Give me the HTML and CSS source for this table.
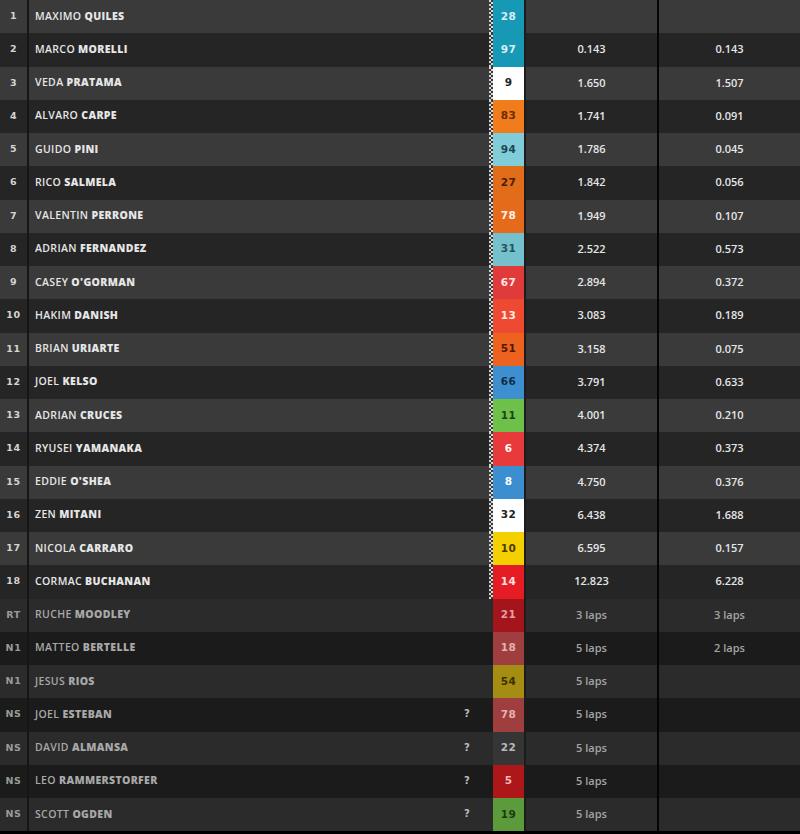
FILE: index.html
```html
<!DOCTYPE html>
<html>
<head>
<meta charset="utf-8">
<link rel="stylesheet" href="styles.css">
</head>
<body>
<div class="table">
  <div class="row light"><div class="pos">1</div><div class="name"><span class="nm"><span class="fn">MAXIMO</span> <span class="ln">QUILES</span></span></div><div class="chk"></div><div class="num c-teal">28</div><div class="gap"></div><div class="diff"></div></div>
  <div class="row dark"><div class="pos">2</div><div class="name"><span class="nm"><span class="fn">MARCO</span> <span class="ln">MORELLI</span></span></div><div class="chk"></div><div class="num c-teal">97</div><div class="gap">0.143</div><div class="diff">0.143</div></div>
  <div class="row light"><div class="pos">3</div><div class="name"><span class="nm"><span class="fn">VEDA</span> <span class="ln">PRATAMA</span></span></div><div class="chk"></div><div class="num c-white">9</div><div class="gap">1.650</div><div class="diff">1.507</div></div>
  <div class="row dark"><div class="pos">4</div><div class="name"><span class="nm"><span class="fn">ALVARO</span> <span class="ln">CARPE</span></span></div><div class="chk"></div><div class="num c-orange">83</div><div class="gap">1.741</div><div class="diff">0.091</div></div>
  <div class="row light"><div class="pos">5</div><div class="name"><span class="nm"><span class="fn">GUIDO</span> <span class="ln">PINI</span></span></div><div class="chk"></div><div class="num c-cyan">94</div><div class="gap">1.786</div><div class="diff">0.045</div></div>
  <div class="row dark"><div class="pos">6</div><div class="name"><span class="nm"><span class="fn">RICO</span> <span class="ln">SALMELA</span></span></div><div class="chk"></div><div class="num c-orange2">27</div><div class="gap">1.842</div><div class="diff">0.056</div></div>
  <div class="row light"><div class="pos">7</div><div class="name"><span class="nm"><span class="fn">VALENTIN</span> <span class="ln">PERRONE</span></span></div><div class="chk"></div><div class="num c-orange3">78</div><div class="gap">1.949</div><div class="diff">0.107</div></div>
  <div class="row dark"><div class="pos">8</div><div class="name"><span class="nm"><span class="fn">ADRIAN</span> <span class="ln">FERNANDEZ</span></span></div><div class="chk"></div><div class="num c-cyan2">31</div><div class="gap">2.522</div><div class="diff">0.573</div></div>
  <div class="row light"><div class="pos">9</div><div class="name"><span class="nm"><span class="fn">CASEY</span> <span class="ln">O'GORMAN</span></span></div><div class="chk"></div><div class="num c-red">67</div><div class="gap">2.894</div><div class="diff">0.372</div></div>
  <div class="row dark"><div class="pos">10</div><div class="name"><span class="nm"><span class="fn">HAKIM</span> <span class="ln">DANISH</span></span></div><div class="chk"></div><div class="num c-red2">13</div><div class="gap">3.083</div><div class="diff">0.189</div></div>
  <div class="row light"><div class="pos">11</div><div class="name"><span class="nm"><span class="fn">BRIAN</span> <span class="ln">URIARTE</span></span></div><div class="chk"></div><div class="num c-orange4">51</div><div class="gap">3.158</div><div class="diff">0.075</div></div>
  <div class="row dark"><div class="pos">12</div><div class="name"><span class="nm"><span class="fn">JOEL</span> <span class="ln">KELSO</span></span></div><div class="chk"></div><div class="num c-blue">66</div><div class="gap">3.791</div><div class="diff">0.633</div></div>
  <div class="row light"><div class="pos">13</div><div class="name"><span class="nm"><span class="fn">ADRIAN</span> <span class="ln">CRUCES</span></span></div><div class="chk"></div><div class="num c-green">11</div><div class="gap">4.001</div><div class="diff">0.210</div></div>
  <div class="row dark"><div class="pos">14</div><div class="name"><span class="nm"><span class="fn">RYUSEI</span> <span class="ln">YAMANAKA</span></span></div><div class="chk"></div><div class="num c-red3">6</div><div class="gap">4.374</div><div class="diff">0.373</div></div>
  <div class="row light"><div class="pos">15</div><div class="name"><span class="nm"><span class="fn">EDDIE</span> <span class="ln">O'SHEA</span></span></div><div class="chk"></div><div class="num c-blue2">8</div><div class="gap">4.750</div><div class="diff">0.376</div></div>
  <div class="row dark"><div class="pos">16</div><div class="name"><span class="nm"><span class="fn">ZEN</span> <span class="ln">MITANI</span></span></div><div class="chk"></div><div class="num c-white">32</div><div class="gap">6.438</div><div class="diff">1.688</div></div>
  <div class="row light"><div class="pos">17</div><div class="name"><span class="nm"><span class="fn">NICOLA</span> <span class="ln">CARRARO</span></span></div><div class="chk"></div><div class="num c-yellow">10</div><div class="gap">6.595</div><div class="diff">0.157</div></div>
  <div class="row dark"><div class="pos">18</div><div class="name"><span class="nm"><span class="fn">CORMAC</span> <span class="ln">BUCHANAN</span></span></div><div class="chk"></div><div class="num c-red4">14</div><div class="gap">12.823</div><div class="diff">6.228</div></div>
  <div class="row out light"><div class="pos">RT</div><div class="name"><span class="nm"><span class="fn">RUCHE</span> <span class="ln">MOODLEY</span></span></div><div class="nochk"></div><div class="num d-red">21</div><div class="gap">3 laps</div><div class="diff">3 laps</div></div>
  <div class="row out dark"><div class="pos">N1</div><div class="name"><span class="nm"><span class="fn">MATTEO</span> <span class="ln">BERTELLE</span></span></div><div class="nochk"></div><div class="num d-rose">18</div><div class="gap">5 laps</div><div class="diff">2 laps</div></div>
  <div class="row out light"><div class="pos">N1</div><div class="name"><span class="nm"><span class="fn">JESUS</span> <span class="ln">RIOS</span></span></div><div class="nochk"></div><div class="num d-olive">54</div><div class="gap">5 laps</div><div class="diff"></div></div>
  <div class="row out dark"><div class="pos">NS</div><div class="name"><span class="nm"><span class="fn">JOEL</span> <span class="ln">ESTEBAN</span></span><span class="q">?</span></div><div class="nochk"></div><div class="num d-rose">78</div><div class="gap">5 laps</div><div class="diff"></div></div>
  <div class="row out light"><div class="pos">NS</div><div class="name"><span class="nm"><span class="fn">DAVID</span> <span class="ln">ALMANSA</span></span><span class="q">?</span></div><div class="nochk"></div><div class="num d-gray">22</div><div class="gap">5 laps</div><div class="diff"></div></div>
  <div class="row out dark"><div class="pos">NS</div><div class="name"><span class="nm"><span class="fn">LEO</span> <span class="ln">RAMMERSTORFER</span></span><span class="q">?</span></div><div class="nochk"></div><div class="num d-red2">5</div><div class="gap">5 laps</div><div class="diff"></div></div>
  <div class="row out light"><div class="pos">NS</div><div class="name"><span class="nm"><span class="fn">SCOTT</span> <span class="ln">OGDEN</span></span><span class="q">?</span></div><div class="nochk"></div><div class="num d-green">19</div><div class="gap">5 laps</div><div class="diff"></div></div>
</div>
</body>
</html>
```

FILE: styles.css
```css
html, body {
  margin: 0;
  padding: 0;
  background: #000;
}
body {
  width: 800px;
  height: 834px;
  overflow: hidden;
  font-family: "Open Sans", "Liberation Sans", sans-serif;
}
.table {
  display: flex;
  flex-direction: column;
}
.row {
  display: grid;
  grid-template-columns: 29px 460px 4px 33px 131px 143px;
  height: 33.25px;
  color: #e6e6e6;
}
.row > div {
  box-sizing: border-box;
  padding-bottom: 2px;
}
.row.light { background: #3a3a3a; }
.row.dark { background: #252525; }
.row.out.light { background: #2b2b2b; }
.row.out.dark { background: #1b1b1b; }
.row.out { color: #a8a8a8; }

.pos {
  display: flex;
  align-items: center;
  justify-content: center;
  font-family: "DejaVu Sans", sans-serif;
  font-weight: bold;
  font-size: 9.5px;
  letter-spacing: 0.6px;
  color: #d4d4d4;
  border-right: 2px solid #161616;
}
.row.out .pos { color: #9a9a9a; }

.name {
  display: flex;
  align-items: center;
  padding-left: 6px;
  padding-right: 18px;
  font-size: 10.5px;
  letter-spacing: 0.35px;
  white-space: pre;
}
.fn { font-weight: 600; }
.ln { font-weight: 800; }
.q {
  margin-left: auto;
  font-family: "DejaVu Sans", sans-serif;
  font-weight: bold;
  font-size: 10px;
  color: #bdbdbd;
  width: 8px;
  text-align: center;
}
.chk {
  background-color: #d8d8d8;
  background-image: conic-gradient(#3a3a3a 25%, transparent 0 50%, #3a3a3a 0 75%, transparent 0);
  background-size: 4px 4px;
}

.num {
  display: flex;
  align-items: center;
  justify-content: center;
  font-family: "DejaVu Sans", sans-serif;
  font-weight: bold;
  font-size: 10.5px;
  letter-spacing: 0.4px;
  border-right: 2px solid #1c1c1c;
}
.gap, .diff {
  display: flex;
  align-items: center;
  justify-content: center;
  font-size: 11px;
  font-weight: 600;
}
.diff {
  border-left: 2px solid #050505;
}
.row.out .gap, .row.out .diff { color: #a5a5a5; }

.c-teal { background: #1799b6; color: #d8eef3; }
.c-white { background: #ffffff; color: #222; }
.c-orange { background: #f17c1c; color: #6a2c06; }
.c-cyan { background: #81ccd9; color: #1d4650; }
.c-orange2 { background: #e16c1a; color: #4c1e04; }
.c-orange3 { background: #e66a1b; color: #fff1e6; }
.c-cyan2 { background: #74c1cd; color: #25525c; }
.c-red { background: #df3b3b; color: #ffe6e6; }
.c-red2 { background: #ee4931; color: #ffe9e3; }
.c-orange4 { background: #ee621f; color: #4d1a04; }
.c-blue { background: #3d8fcf; color: #0f2c45; }
.c-green { background: #6dc14a; color: #1f4410; }
.c-red3 { background: #e83a3a; color: #fff; }
.c-blue2 { background: #3b8fd1; color: #fff; }
.c-yellow { background: #f5d000; color: #4a3c00; }
.c-red4 { background: #e51c24; color: #ffe0e0; }
.d-red { background: #a3141b; color: #e2a0a3; }
.d-rose { background: #9f3e3f; color: #e6b0b0; }
.d-olive { background: #a48d12; color: #3a3000; }
.d-gray { background: #353535; color: #b8b8b8; }
.d-red2 { background: #ad1719; color: #f0b8b8; }
.d-green { background: #5b9b3c; color: #1d3b10; }
```
